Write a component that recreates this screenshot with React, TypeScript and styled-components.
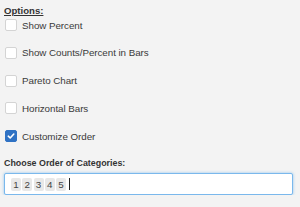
import React from "react";
import styled, { createGlobalStyle } from "styled-components";

const Global = createGlobalStyle`
  body {
    margin: 0;
    background: #f3f3f3;
    font-family: "Liberation Sans", Arial, sans-serif;
    color: #333;
  }
`;

const Panel = styled.section`
  padding: 5px 7px 0 4px;
  display: flex;
  flex-direction: column;
`;

const Heading = styled.div`
  font-size: 9.6px;
  font-weight: bold;
  line-height: 12px;
  text-decoration: underline;
  color: #333;
`;

const List = styled.div`
  display: flex;
  flex-direction: column;
  gap: 13.75px;
  margin-top: 1px;
`;

const Row = styled.label`
  display: flex;
  align-items: center;
  height: 14px;
  padding-left: 1px;
  font-size: 9.8px;
  letter-spacing: -0.05px;
  color: #3a3a3a;
`;

const Box = styled.span<{ $checked?: boolean }>`
  width: 12px;
  height: 12px;
  box-sizing: border-box;
  border-radius: 2px;
  margin-right: 5px;
  display: flex;
  align-items: center;
  justify-content: center;
  background: ${(p) => (p.$checked ? "#2f72c4" : "#fff")};
  border: 1px solid ${(p) => (p.$checked ? "#2f72c4" : "#d4d4d4")};
`;

const SubHeading = styled.div`
  font-size: 8.9px;
  font-weight: bold;
  line-height: 14px;
  margin-top: 13px;
  color: #333;
`;

const Input = styled.div`
  margin-top: 3px;
  height: 22px;
  box-sizing: border-box;
  background: #fff;
  border: 1px solid #7ab8ec;
  border-radius: 2px;
  box-shadow: 0 0 3px rgba(102, 175, 233, 0.7);
  display: flex;
  align-items: center;
  padding: 0 6px;
  gap: 1.25px;
`;

const Chip = styled.span`
  height: 13px;
  width: 10px;
  background: #e8e8e8;
  border-radius: 2px;
  font-size: 9.8px;
  line-height: 13px;
  text-align: center;
  color: #444;
`;

const Caret = styled.span`
  width: 1px;
  height: 12px;
  background: #222;
  margin-left: 2px;
`;

const options = [
  { label: "Show Percent", checked: false },
  { label: "Show Counts/Percent in Bars", checked: false },
  { label: "Pareto Chart", checked: false },
  { label: "Horizontal Bars", checked: false },
  { label: "Customize Order", checked: true },
];

export default function App() {
  return (
    <>
      <Global />
      <Panel>
        <Heading>Options:</Heading>
        <List>
          {options.map((o) => (
            <Row key={o.label}>
              <Box $checked={o.checked}>
                {o.checked && (
                  <svg width="8" height="8" viewBox="0 0 8 8">
                    <path d="M1.3 4.2 L3.2 6 L6.8 2" fill="none" stroke="#fff" strokeWidth="1.6" strokeLinecap="round" strokeLinejoin="round" />
                  </svg>
                )}
              </Box>
              {o.label}
            </Row>
          ))}
        </List>
        <SubHeading>Choose Order of Categories:</SubHeading>
        <Input>
          {["1", "2", "3", "4", "5"].map((c) => (
            <Chip key={c}>{c}</Chip>
          ))}
          <Caret />
        </Input>
      </Panel>
    </>
  );
}
